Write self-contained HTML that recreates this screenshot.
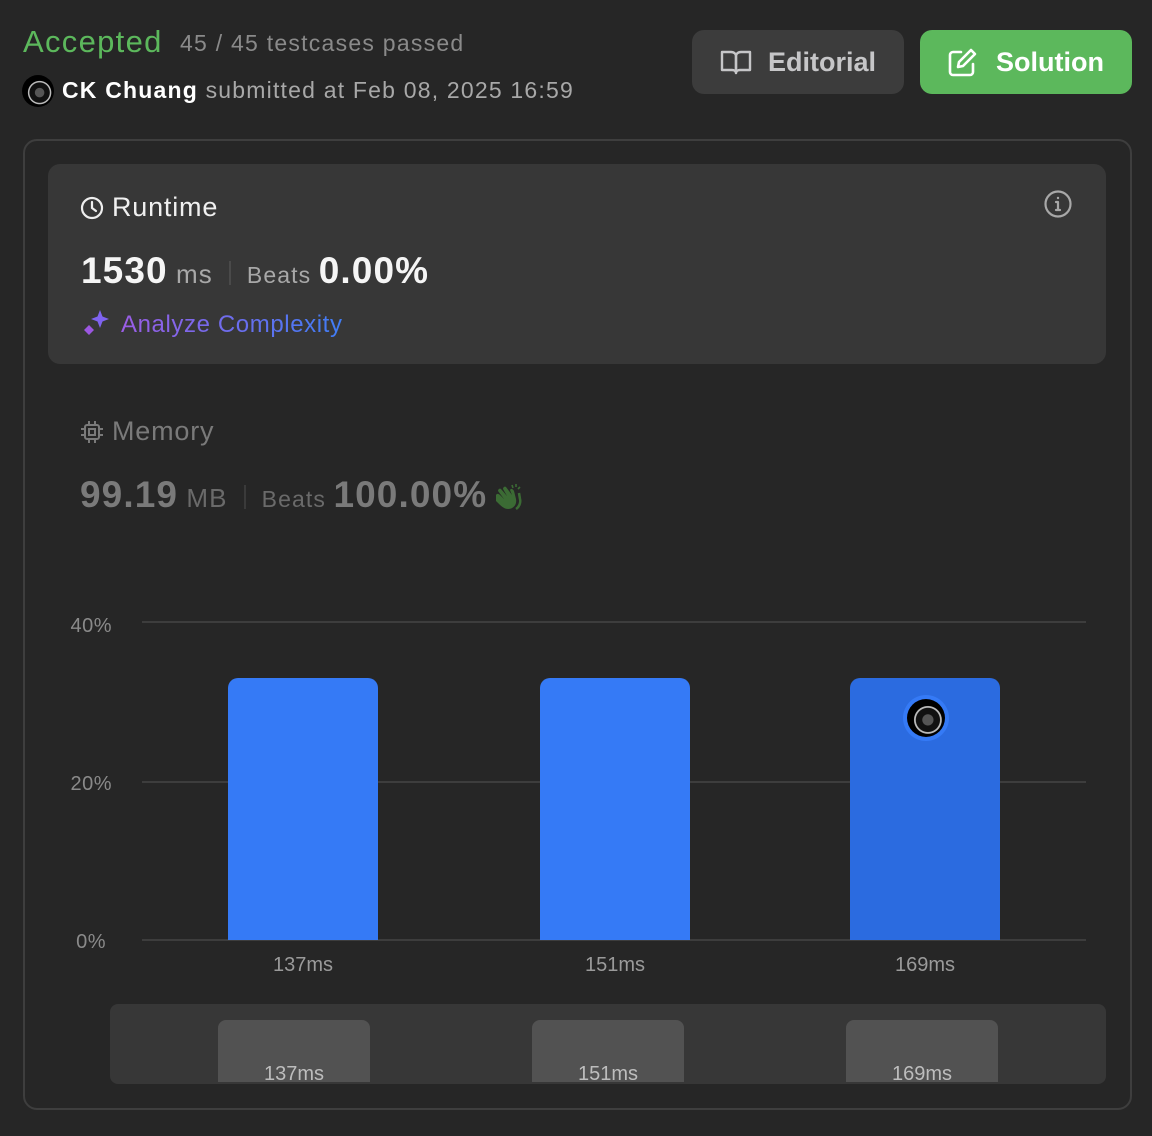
<!DOCTYPE html>
<html><head><meta charset="utf-8"><style>
*{margin:0;padding:0;box-sizing:border-box}
body{width:1152px;height:1136px;background:#262626;font-family:"Liberation Sans",sans-serif;position:relative;overflow:hidden;color:#eee}
.abs{position:absolute}
.btn{position:absolute;top:30px;height:64px;border-radius:12px;display:flex;align-items:center;font-size:27px;font-weight:bold}
.av{border-radius:50%;background:radial-gradient(circle at 55% 55%,#555 0 18%,#111 20% 40%,#bbb 42% 46%,#000 48%)}
.grid{position:absolute;left:142px;width:944px;height:2px;background:#3d3d3d}
.yl{position:absolute;left:40px;width:72px;text-align:right;font-size:20px;color:#8a8a8a}
.bar{position:absolute;top:678px;width:150px;height:262px;background:#357af6;border-radius:10px 10px 0 0}
.xl{position:absolute;top:953px;width:150px;text-align:center;font-size:20px;color:#9a9a9a}
.sb{position:absolute;top:1020px;width:152px;height:62px;background:#525252;border-radius:8px 8px 0 0;text-align:center;font-size:20px;color:#bdbdbd;padding-top:44px;line-height:1;overflow:hidden}
</style></head><body>
<div class="abs" style="left:23px;top:24px;font-size:31px;color:#5cb85c;letter-spacing:1.3px">Accepted</div>
<div class="abs" style="left:180px;top:30px;font-size:23px;color:#8a8a8a;letter-spacing:1.25px">45 / 45 testcases passed</div>
<div class="abs av" style="left:22px;top:75px;width:32px;height:32px"></div>
<div class="abs" style="left:62px;top:77px;font-size:23px;letter-spacing:1.2px;white-space:nowrap"><b style="color:#fff">CK Chuang</b> <span style="color:#a8a8a8">submitted at Feb 08, 2025 16:59</span></div>

<div class="btn" style="left:692px;width:212px;background:#3c3c3c;color:#c6c6c8;padding-left:28px">
<svg width="32" height="26" viewBox="0 0 32 26" fill="none" stroke="#c6c6c8" stroke-width="2.4" stroke-linejoin="round"><path d="M2 3h9c3 0 5 2 5 4v17c0-2-2-3-4-3H2z"/><path d="M30 3h-9c-3 0-5 2-5 4v17c0-2 2-3 4-3h10z"/></svg>
<span style="margin-left:16px">Editorial</span></div>
<div class="btn" style="left:920px;width:212px;background:#5cb85c;color:#fff;padding-left:28px">
<svg width="30" height="30" viewBox="0 0 30 30" fill="none" stroke="#fff" stroke-width="2.6" stroke-linecap="round" stroke-linejoin="round"><path d="M13 5H5a3 3 0 0 0-3 3v17a3 3 0 0 0 3 3h17a3 3 0 0 0 3-3v-8"/><path d="M23 3l4 4-12 12-5 1 1-5z"/></svg>
<span style="margin-left:18px">Solution</span></div>

<div class="abs" style="left:23px;top:139px;width:1109px;height:971px;border:2px solid #3e3e3e;border-radius:14px"></div>
<div class="abs" style="left:48px;top:164px;width:1058px;height:200px;background:#373737;border-radius:12px"></div>
<svg class="abs" style="left:80px;top:196px" width="24" height="24" viewBox="0 0 24 24" fill="none" stroke="#eee" stroke-width="2.2" stroke-linecap="round"><circle cx="12" cy="12" r="10"/><path d="M12 6v6l4 3"/></svg>
<div class="abs" style="left:112px;top:192px;font-size:27px;color:#f0f0f0;letter-spacing:0.8px">Runtime</div>
<svg class="abs" style="left:1044px;top:190px" width="28" height="28" viewBox="0 0 28 28" fill="none" stroke="#a8a8a8" stroke-width="2.2"><circle cx="14" cy="14" r="12.5"/><path d="M14 12v8M12 20h4M12 12h2" stroke-linecap="round"/><circle cx="14" cy="8" r="1.2" fill="#a8a8a8" stroke="none"/></svg>
<div class="abs" style="left:81px;top:250px;white-space:nowrap;letter-spacing:1.1px"><b style="font-size:37px;color:#f5f5f5">1530</b><span style="font-size:26px;color:#a8a8a8"> ms</span><span style="display:inline-block;width:2px;height:24px;background:#4a4a4a;margin:0 16px;vertical-align:-2px"></span><span style="font-size:23px;color:#a8a8a8">Beats </span><b style="font-size:37px;color:#f5f5f5">0.00%</b></div>
<svg class="abs" style="left:82px;top:310px" width="30" height="30" viewBox="0 0 30 30"><path d="M18 0l2.5 6.5L27 9l-6.5 2.5L18 18l-2.5-6.5L9 9l6.5-2.5z" fill="#7f63f0"/><path d="M7 15l5 5-5 5-5-5z" fill="#9b57e0"/></svg>
<div class="abs" style="left:121px;top:311px;font-size:24px;letter-spacing:0.6px;background:linear-gradient(90deg,#9b5de5,#3f7df5);-webkit-background-clip:text;color:transparent">Analyze Complexity</div>

<svg class="abs" style="left:80px;top:420px" width="24" height="24" viewBox="0 0 24 24" fill="none" stroke="#7a7a7a" stroke-width="2"><rect x="5" y="5" width="14" height="14" rx="2"/><rect x="9" y="9" width="6" height="6"/><path d="M9 1v4M15 1v4M9 19v4M15 19v4M1 9h4M1 15h4M19 9h4M19 15h4"/></svg>
<div class="abs" style="left:112px;top:416px;font-size:27px;color:#7a7a7a;letter-spacing:0.8px">Memory</div>
<div class="abs" style="left:80px;top:474px;white-space:nowrap;letter-spacing:1.1px"><b style="font-size:37px;color:#7a7a7a">99.19</b><span style="font-size:26px;color:#6a6a6a"> MB</span><span style="display:inline-block;width:2px;height:24px;background:#3a3a3a;margin:0 16px;vertical-align:-2px"></span><span style="font-size:23px;color:#6a6a6a">Beats </span><b style="font-size:37px;color:#7a7a7a">100.00%</b><svg style="margin-left:6px;vertical-align:-4px" width="30" height="28" viewBox="0 0 30 28" fill="#3b6b34"><path d="M3 12c1-2 3-1 4 0l4 4-6-8c0-2 2-3 3-2l6 7-4-7c0-2 2-3 3-2l6 8-2-5c1-2 3-1 4 1l2 8c1 5-2 10-8 10-4 0-7-3-12-8z"/><path d="M19 2l1 3M23 1v3M27 4l-2 2" stroke="#3b6b34" stroke-width="1.6" fill="none"/><path d="M26 10l1 6c1 4-1 8-4 10" stroke="#3b6b34" stroke-width="2.5" fill="none"/></svg></div>

<div class="grid" style="top:621px"></div>
<div class="grid" style="top:781px"></div>
<div class="grid" style="top:939px"></div>
<div class="yl" style="top:615px;letter-spacing:0.5px">40%</div>
<div class="yl" style="top:773px;letter-spacing:0.5px">20%</div>
<div class="yl" style="top:931px;width:66px;letter-spacing:0.5px">0%</div>
<div class="bar" style="left:228px"></div>
<div class="bar" style="left:540px"></div>
<div class="bar" style="left:850px;background:#2b6be0"></div>
<div class="abs" style="left:903px;top:695px;width:46px;height:46px;border-radius:50%;background:#357af6"></div>
<div class="abs av" style="left:907px;top:699px;width:38px;height:38px"></div>
<div class="xl" style="left:228px;top:954px">137ms</div>
<div class="xl" style="left:540px;top:954px">151ms</div>
<div class="xl" style="left:850px;top:954px">169ms</div>

<div class="abs" style="left:110px;top:1004px;width:996px;height:80px;background:#373737;border-radius:8px"></div>
<div class="sb" style="left:218px">137ms</div>
<div class="sb" style="left:532px">151ms</div>
<div class="sb" style="left:846px">169ms</div>
</body></html>
